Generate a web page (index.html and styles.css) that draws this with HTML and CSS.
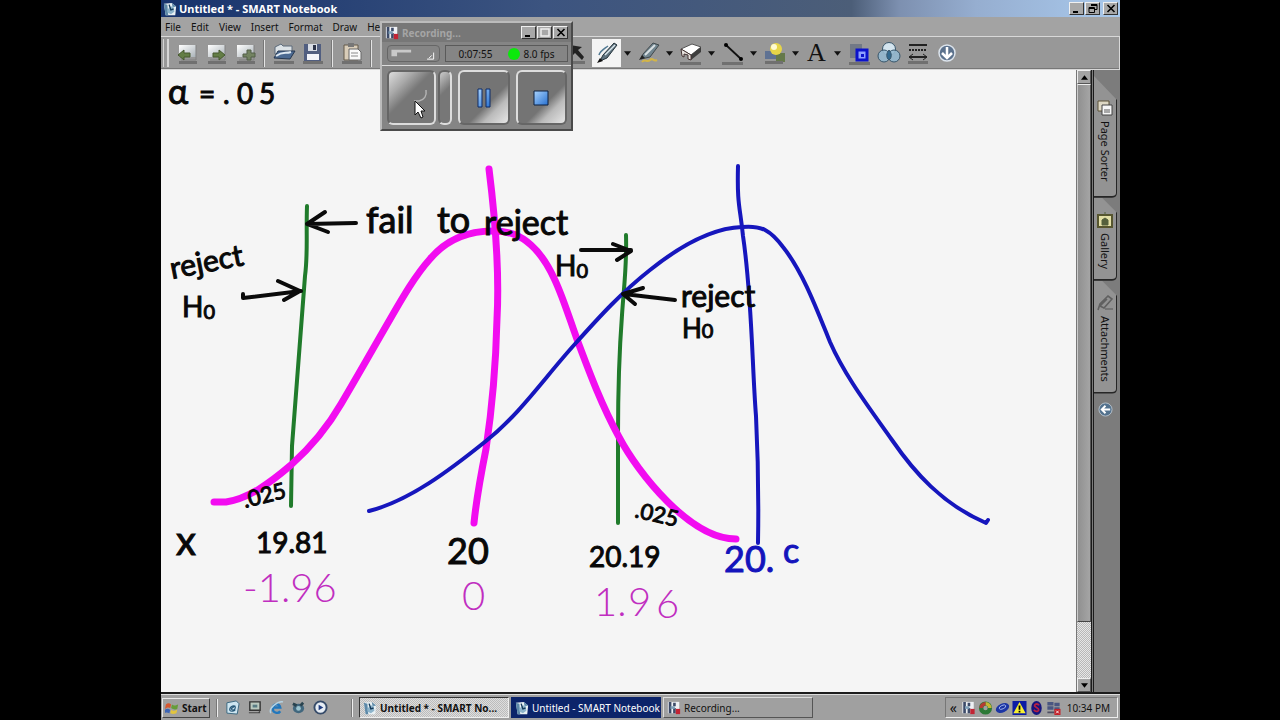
FILE: index.html
```html
<!DOCTYPE html>
<html lang="en">
<head>
<meta charset="utf-8">
<title>Untitled * - SMART Notebook</title>
<link rel="stylesheet" href="styles.css">
</head>
<body>
<svg class="defs" aria-hidden="true">
  <defs>
    <linearGradient id="metal" x1="0" y1="0" x2="1" y2="1"><stop offset="0" stop-color="#fff"/><stop offset="1" stop-color="#a9b2b8"/></linearGradient>
    <linearGradient id="blueFill" x1="0" y1="0" x2="1" y2="1"><stop offset="0" stop-color="#a9d4ff"/><stop offset="1" stop-color="#2870cf"/></linearGradient>
    <symbol id="i-app" viewBox="0 0 16 16"><path d="M1 2l9-1 5 4-1 10H3z" fill="#e9f1f4"/><path d="M1 2l4 1 1 12H3zM10 1l5 4-4 1z" fill="#5d89a8"/><path d="M5 9c2-3 5-5 7-4l1 6-4 3-4-2z" fill="#8db4cb"/><path d="M7 3l2 6 3-1" stroke="#163c5c" stroke-width="1.6" fill="none"/></symbol>
    <symbol id="i-rec" viewBox="0 0 16 16"><path d="M1 1h13v13H1z" fill="#eef0f4"/><path d="M2 1h3v13H2zM7 2h3v4H7zM7 8h3v6H7z" fill="#3c4a68"/><path d="M4 6h5v3H4z" fill="#7fa0b8"/><path d="M10 9h5v6h-5z" fill="#c22434"/></symbol>
    <symbol id="i-page" viewBox="0 0 24 24"><path d="M4 4h17v12H4z" fill="url(#metal)"/><path d="M4 20h18v3H4z" fill="#707070"/><path d="M21 4v15H6" stroke="#808080" fill="none"/></symbol>
    <symbol id="i-caret" viewBox="0 0 8 5"><path d="M0 0h8L4 5z" fill="#111"/></symbol>
  </defs>
</svg>

<div class="desktop">
  <header class="titlebar">
    <svg class="icon16"><use href="#i-app"/></svg>
    <h1 class="titlebar-text">Untitled * - SMART Notebook</h1>
    <div class="window-controls">
      <button class="ctl" aria-label="Minimize"><svg viewBox="0 0 10 9"><path d="M1 7h5v2H1z"/></svg></button>
      <button class="ctl" aria-label="Restore"><svg viewBox="0 0 10 9"><path d="M3 .5h6v5H7M3 1.5h6M1 3.5h5.500v5H1zM1 4.500h5" fill="none" stroke="#000"/></svg></button>
      <button class="ctl ctl-close" aria-label="Close"><svg viewBox="0 0 10 9"><path d="M1.500 1l7 7M8.500 1l-7 7" stroke="#000" stroke-width="1.600"/></svg></button>
    </div>
  </header>

  <nav class="menubar">
    <button>File</button><button>Edit</button><button>View</button><button>Insert</button><button>Format</button><button>Draw</button><button>Help</button>
  </nav>

  <div class="toolbar">
    <span class="grip"></span>
    <button class="tool" aria-label="Previous page"><svg viewBox="0 0 24 24"><use href="#i-page"/><path d="M3 14l6-5v3h6v4H9v3z" fill="#637d45" stroke="#46592f"/></svg></button>
    <button class="tool" aria-label="Next page"><svg viewBox="0 0 24 24"><use href="#i-page"/><path d="M21 14l-6-5v3H9v4h6v3z" fill="#637d45" stroke="#46592f"/></svg></button>
    <button class="tool" aria-label="Add page"><svg viewBox="0 0 24 24"><use href="#i-page"/><path d="M14 9h4v3h4v4h-4v3h-4v-3h-4v-3h4z" fill="#738361" stroke="#535f48"/></svg></button>
    <span class="sep"></span>
    <button class="tool" aria-label="Open"><svg viewBox="0 0 24 24"><path d="M3 6l6-3 2 2h9v8H3z" fill="#dce2e6" stroke="#5c6b7b"/><path d="M2 17l4-7h17l-5 8z" fill="#4b6991" stroke="#26374f"/><path d="M4 15c7-5 9-2 15-4" stroke="#dfe9f2" stroke-width="2" fill="none"/><path d="M2 20h20v3H2z" fill="#707070"/></svg></button>
    <button class="tool" aria-label="Save"><svg viewBox="0 0 24 24"><path d="M3 3h17v17H3z" fill="#515e80"/><path d="M7 3h9v7H7z" fill="#d8dce4"/><path d="M12 4h3v5h-3z" fill="#2c3348"/><path d="M6 13h12v6H6z" fill="#f3f4fa"/><path d="M2 20h20v3H2z" fill="#707070"/></svg></button>
    <span class="sep"></span>
    <button class="tool" aria-label="Paste"><svg viewBox="0 0 24 24"><path d="M4 4h14v15H4z" fill="#d9cdb9" stroke="#655b4a"/><path d="M8 2h6v4H8z" fill="#777"/><path d="M9 8h9l3 3v8H9z" fill="#fafafa" stroke="#666"/><path d="M11 12h7M11 15h7" stroke="#8a8a8a"/><path d="M2 20h20v3H2z" fill="#707070"/></svg></button>
    <span class="sep"></span>
    <span class="tool-run">
      <button class="tool" aria-label="Undo"><svg viewBox="0 0 24 24"><path d="M3 10l6-6v4c8 0 12 3 12 10-3-4-6-5-12-5v4z" fill="#6d84a8"/></svg></button>
      <button class="tool" aria-label="Redo"><svg viewBox="0 0 24 24"><path d="M21 10l-6-6v4C7 8 3 11 3 18c3-4 6-5 12-5v4z" fill="#6d84a8"/></svg></button>
    </span>
    <button class="tool" aria-label="Select"><svg viewBox="0 0 24 24"><path d="M4 4l12 2-4 3 6 7-2 3-7-7-3 3z" fill="#222"/><path d="M2 20h17v3H2z" fill="#707070"/></svg></button>
    <button class="tool active" aria-label="Pen"><svg viewBox="0 0 24 24"><path d="M5 20l3-6L19 2l3 2-10 13z" fill="#5f737f" stroke="#26343c"/><path d="M10 14L20 4" stroke="#dbe8ee" stroke-width="1.500"/><path d="M4 14c1-4 5-6 9-9" stroke="#517993" stroke-width="1.500" fill="none"/><path d="M2 22l3-5 3 3z" fill="#111"/></svg></button>
    <button class="drop" aria-label="Pen options"><svg><use href="#i-caret"/></svg></button>
    <button class="tool" aria-label="Highlighter"><svg viewBox="0 0 24 24"><path d="M4 18l2-5L16 2l6 2-9 12z" fill="#71858f" stroke="#40484c"/><path d="M8 14L18 4" stroke="#d9e0e2" stroke-width="2"/><path d="M2 19l3-5 3 3z" fill="#222"/><path d="M5 21c3-4 5 1 8-2s3 2 7 0" stroke="#d3b548" stroke-width="2" fill="none"/></svg></button>
    <button class="drop" aria-label="Highlighter options"><svg><use href="#i-caret"/></svg></button>
    <button class="tool" aria-label="Eraser"><svg viewBox="0 0 24 24"><path d="M2 8l11-5 9 3-10 8z" fill="#fff" stroke="#555"/><path d="M12 14l10-8v5L12 19z" fill="#3d3d3d"/><path d="M2 8l10 6v5l-3-1v-4l-4-1v3l-2-1z" fill="#e8e3df" stroke="#433"/><path d="M1 21h21v3H1z" fill="#707070"/></svg></button>
    <button class="drop" aria-label="Eraser options"><svg><use href="#i-caret"/></svg></button>
    <button class="tool" aria-label="Line"><svg viewBox="0 0 24 24"><path d="M5 4l15 14" stroke="#111" stroke-width="1.800"/><circle cx="5" cy="4" r="2"/><circle cx="20" cy="18" r="2"/><path d="M1 21h21v3H1z" fill="#707070"/></svg></button>
    <button class="drop" aria-label="Line options"><svg><use href="#i-caret"/></svg></button>
    <button class="tool" aria-label="Shapes"><svg viewBox="0 0 24 24"><path d="M2 10h12v8H2z" fill="#5f7293"/><path d="M13 12h9v9h-9z" fill="#65794a"/><circle cx="13" cy="8" r="6" fill="#e6d548"/><circle cx="11" cy="6" r="3" fill="#fffbd0"/><path d="M2 20h18v3H2z" fill="#707070"/></svg></button>
    <button class="drop" aria-label="Shape options"><svg><use href="#i-caret"/></svg></button>
    <button class="tool tool-letter" aria-label="Text">A</button>
    <button class="drop" aria-label="Text options"><svg><use href="#i-caret"/></svg></button>
    <button class="tool gap-left" aria-label="Properties"><svg viewBox="0 0 24 24"><path d="M2 3h12v14H2z" fill="#727986"/><path d="M9 9h10v10H9z" fill="#8da0ff" stroke="#0b12cc" stroke-width="3"/><path d="M13 13h3v3h-3z" fill="#0b12cc"/><path d="M1 21h21v3H1z" fill="#707070"/></svg></button>
    <button class="tool" aria-label="Transparency"><svg viewBox="0 0 24 24" stroke="#38566b"><circle cx="12" cy="8" r="6.500" fill="#d4e5ef"/><circle cx="7" cy="15" r="6" fill="#94b8cf" fill-opacity=".9"/><circle cx="17" cy="15" r="6" fill="#94b8cf" fill-opacity=".9"/><path d="M12 9c3 3 3 8 0 10-3-2-3-7 0-10z" fill="#31698f"/></svg></button>
    <button class="tool" aria-label="Line style"><svg viewBox="0 0 24 24"><path d="M3 4h18M3 16h18" stroke="#222" stroke-width="1.800"/><path d="M3 9h18" stroke="#222" stroke-width="2" stroke-dasharray="2 1"/><path d="M7 13l-4 3 4 3M17 13l4 3-4 3" fill="none" stroke="#222"/><path d="M2 20h20v3H2z" fill="#707070"/></svg></button>
    <button class="tool" aria-label="More tools"><svg viewBox="0 0 24 24"><circle cx="12" cy="12" r="8" fill="#5c728d" stroke="#dce4ec" stroke-width="1.500"/><path d="M12 6v10M7 12l5 5 5-5" stroke="#fff" stroke-width="2.500" fill="none"/></svg></button>
  </div>

  <main class="workspace">
    <svg class="page" viewBox="161 70 915 622" preserveAspectRatio="xMinYMin meet" role="img" aria-label="Two sampling distributions with rejection regions">
      <g class="ink green">
        <path d="M307 206c-1 30 1 48-2 70-5 60-9 118-13 170l-1 60"/>
        <path d="M626 235c1 30-2 50-4 80-3 40-4 90-4 120v88"/>
      </g>
      <g class="ink magenta">
        <path d="M214 502h12C248 499 270 483 291 465C311 447 326 430 341 404C357 377 370 354 385 328C399 304 413 278 430 259C446 240 468 231 493 231C509 231 520 235 531 245C555 266 566 310 578 342C590 374 602 406 619 437C638 473 690 539 736 539"/>
        <path d="M489 169c5 40 11 95 8 150-1 40-5 90-11 130-6 30-10 54-12 74"/>
      </g>
      <g class="ink blue">
        <path d="M369 511C409 501 450 470 486 441C520 414 545 377 575 344C600 316 622 292 650 270C680 246 712 228 742 227C762 225 771 231 783 247C803 272 817 310 830 342C845 376 868 406 892 440C914 472 942 504 986 523l2-3"/>
        <path d="M738 166c-1 40 2 40 5 70 9 60 9 130 13 180 2 40 3 70 2 127"/>
      </g>
      <g class="ink black">
        <path d="M356 223l-49 1M325 212l-18 12 21 8"/>
        <path d="M243 294v4l58-7M278 281l22 10-16 9"/>
        <path d="M581 250h50M613 244l18 7-14 9"/>
        <path d="M675 300l-51-6M643 288l-20 6 12 10"/>
      </g>
      <g class="note">
        <text class="size-34" x="168" y="104">α</text>
        <text class="size-28" x="199" y="104">=</text>
        <text class="size-28" x="223" y="104">.</text>
        <text class="size-28" x="237" y="104">0</text>
        <text class="size-28" x="259" y="104">5</text>
        <text class="size-36" x="366" y="233">fail</text>
        <text class="size-36" x="437" y="233">to</text>
        <text class="size-34" x="484" y="235">reject</text>
        <text class="size-30" transform="translate(172 279) rotate(-11)">reject</text>
        <text class="size-28" x="182" y="317">H<tspan class="sub" dy="2">0</tspan></text>
        <text class="size-28" x="555" y="276">H<tspan class="sub" dy="2">0</tspan></text>
        <text class="size-30" x="681" y="307">reject</text>
        <text class="size-26" x="682" y="338">H<tspan class="sub">0</tspan></text>
        <text class="size-22" transform="translate(245 508) rotate(-14)">.025</text>
        <text class="size-22" transform="translate(634 517) rotate(13)">.025</text>
        <text class="size-40" x="176" y="555">x</text>
        <text class="size-28" x="256" y="553">19.81</text>
        <text class="size-36" x="447" y="564">20</text>
        <text class="size-28" x="589" y="567">20.19</text>
      </g>
      <g class="note note-blue">
        <text class="size-36" x="724" y="572">20.</text>
        <text class="size-34" x="783" y="563">c</text>
      </g>
      <g class="note note-thin">
        <text class="size-40" x="243" y="602">-1.96</text>
        <text class="size-40" x="462" y="610">0</text>
        <text class="size-40" x="594" y="616">1.</text>
        <text class="size-40" x="628" y="616">9</text>
        <text class="size-40" x="656" y="618">6</text>
      </g>
    </svg>

    <div class="scrollbar">
      <button class="scroll-btn" aria-label="Scroll up"><svg viewBox="0 0 8 5"><path d="M0 5h8L4 0z"/></svg></button>
      <div class="scroll-thumb"></div>
      <div class="scroll-track"></div>
      <button class="scroll-btn" aria-label="Scroll down"><svg viewBox="0 0 8 5"><path d="M0 0h8L4 5z"/></svg></button>
    </div>

    <aside class="side">
      <button class="tab tab-first"><svg viewBox="0 0 16 16"><path d="M1 1h11v10H1z" fill="#ded8c4" stroke="#5c5238"/><path d="M5 5h10v10H5z" fill="#f7f7f7" stroke="#444"/><path d="M7 9h6v4H7z" fill="#a8a8a8"/></svg><span>Page Sorter</span></button>
      <button class="tab tab-second"><svg viewBox="0 0 16 16"><path d="M1 3h14v12H1z" fill="#e3dfa6" stroke="#57562f" stroke-width="2"/><path d="M8 0v3M5 13V8l3-2 3 2v5z" fill="#55603c" stroke="#55603c"/></svg><span>Gallery</span></button>
      <button class="tab tab-third"><svg viewBox="0 0 16 16"><path d="M1 15l2-6 8-8 4 3-8 9-4-2 7-7" fill="none" stroke="#606060" stroke-width="1.600"/><path d="M8 14h8" stroke="#747474" stroke-width="2"/></svg><span>Attachments</span></button>
      <button class="side-arrow" aria-label="Move side tabs"><svg viewBox="0 0 16 16"><circle cx="8" cy="8" r="7" fill="#53728e" stroke="#b5c0ca"/><path d="M13 8H4M8 4L4 8l4 4" stroke="#fff" stroke-width="2" fill="none"/></svg></button>
    </aside>
  </main>

  <footer class="taskbar">
    <button class="start"><svg viewBox="0 0 16 16"><path d="M1 4c2-2 4-2 6 0L6 8C4 7 3 7 0 9z" fill="#d6562f"/><path d="M8 4c3 2 4 1 7 0l-1 5c-3 1-4 1-7-1z" fill="#669c38"/><path d="M0 10c2-2 4-1 6 0l-1 4c-2-1-4-1-6 0z" fill="#3c64b4"/><path d="M7 10c3 2 4 1 7 0l-1 4c-3 1-4 1-7 0z" fill="#e2c53c"/></svg>Start</button>
    <span class="task-sep"></span>
    <div class="quick">
      <button aria-label="Outlook"><svg viewBox="0 0 16 16"><path d="M2 3l10-2 3 3-2 11-11-1z" fill="#cde5f0" stroke="#38657e"/><path d="M5 11c0-5 6-6 6-3s-4 4-4 1l4-3M5 11c2 2 4 1 6 0" fill="none" stroke="#275878" stroke-width="1.300"/></svg></button>
      <button aria-label="Show desktop"><svg viewBox="0 0 16 16"><path d="M3 2h11v9H3z" fill="#bac9bf" stroke="#333" stroke-width="1.500"/><path d="M6 5h5v3H6z" fill="#597c83"/><path d="M2 13h10l2-2v3H2z" fill="#454545"/></svg></button>
      <button aria-label="Internet Explorer"><svg viewBox="0 0 16 16"><path d="M12 12c-2 3-8 2-8-3s7-6 8-1H5" fill="none" stroke="#2177bd" stroke-width="2.500"/><path d="M2 14C-1 9 9 1 15 2" fill="none" stroke="#b6d3e3" stroke-width="1.500"/></svg></button>
      <button aria-label="Messenger"><svg viewBox="0 0 16 16"><ellipse cx="8" cy="9" rx="6" ry="5" fill="#41677e"/><path d="M2 4l4 2M13 3l-3 3" stroke="#29434f" stroke-width="3"/><circle cx="8" cy="9" r="2.500" fill="#9bc4cf"/></svg></button>
      <button aria-label="Media Player"><svg viewBox="0 0 16 16"><circle cx="8" cy="8" r="6.500" fill="#e7edf4" stroke="#364b69" stroke-width="2"/><path d="M6 5l5 3-5 3z" fill="#1e3c80"/></svg></button>
    </div>
    <span class="task-sep"></span>
    <div class="tasks">
      <button class="task task-pressed"><svg class="icon16"><use href="#i-app"/></svg><span>Untitled * - SMART No...</span></button>
      <button class="task task-flash"><svg class="icon16"><use href="#i-app"/></svg><span>Untitled - SMART Notebook</span></button>
      <button class="task"><svg class="icon16"><use href="#i-rec"/></svg><span>Recording...</span></button>
    </div>
    <div class="tray">
      <span class="chevrons">«</span>
      <svg><use href="#i-rec"/></svg>
      <svg viewBox="0 0 16 16"><circle cx="8" cy="8" r="5" fill="none" stroke="#2d7937" stroke-width="5"/><path d="M8 3a5 5 0 0 1 5 5" fill="none" stroke="#c5b535" stroke-width="4"/><path d="M3 8a5 5 0 0 1 5-5" fill="none" stroke="#b63a34" stroke-width="4"/></svg>
      <svg viewBox="0 0 16 16"><ellipse cx="8" cy="8" rx="8" ry="5" transform="rotate(-25 8 8)" fill="#1c35a4"/><ellipse cx="8" cy="7" rx="4" ry="2" transform="rotate(-25 8 7)" fill="none" stroke="#a3b7ef"/></svg>
      <svg viewBox="0 0 16 16"><path d="M0 0h16v16H0z" fill="#0b1ba4"/><path d="M8 1l7 13H1z" fill="#f6ef33"/><path d="M7 5h2v5H7zM7 11h2v2H7z"/></svg>
      <svg viewBox="0 0 16 16"><ellipse cx="8" cy="8" rx="6" ry="8" fill="#15157e"/><path d="M11 5c-2-3-6-1-5 1l4 3c2 3-3 4-5 1" stroke="#b52143" stroke-width="2" fill="none"/></svg>
      <svg viewBox="0 0 16 16"><path d="M1 1h7v4H1zM1 6h7v4H1zM9 2h6v4H9zM9 7h6v4H9z" fill="#4a5681"/><path d="M1 12h8v2H1z" fill="#4f4f63"/><path d="M9 9h7v7H9z" fill="#c32129"/><path d="M11 11l3 3M14 11l-3 3" stroke="#fff"/></svg>
      <time>10:34 PM</time>
    </div>
  </footer>

  <section class="recorder" aria-label="Recording">
    <div class="rec-title">
      <svg class="icon16"><use href="#i-rec"/></svg>
      <h2>Recording...</h2>
      <div class="window-controls">
        <button class="ctl" aria-label="Minimize recorder"><svg viewBox="0 0 10 9"><path d="M1 7h5v2H1z"/></svg></button>
        <button class="ctl" aria-label="Maximize recorder" disabled><svg viewBox="0 0 10 9"><path d="M1 1h8v7H1z" fill="none" stroke="#eee" stroke-width="1.500"/></svg></button>
        <button class="ctl" aria-label="Close recorder"><svg viewBox="0 0 10 9"><path d="M1.500 1l7 7M8.500 1l-7 7" stroke="#000" stroke-width="1.600"/></svg></button>
      </div>
    </div>
    <div class="rec-status">
      <button class="rec-mini" aria-label="Menu"><svg viewBox="0 0 52 16"><path d="M3 11V4h21v3H9v4z" fill="#c9c9c9"/><path d="M43 13l3-3M48 7v7h-7" stroke="#fff" fill="none"/></svg></button>
      <div class="rec-info"><span>0:07:55</span><span class="led"></span><span>8.0 fps</span></div>
    </div>
    <div class="rec-buttons">
      <button class="rec-key key-record" aria-label="Record"><svg viewBox="0 0 20 20"><path d="M18 2c1 6-2 10-7 11H6" fill="none" stroke="#b5b5b5" stroke-width="1.500"/></svg></button>
      <button class="rec-key key-narrow" aria-label="Options"></button>
      <button class="rec-key key-lit" aria-label="Pause"><svg viewBox="0 0 20 20"><path d="M4 1h4v18H4zM12 1h4v18h-4z" fill="url(#blueFill)" stroke="#0c2b66"/></svg></button>
      <button class="rec-key key-lit" aria-label="Stop"><svg viewBox="0 0 20 20"><path d="M3 3h14v14H3z" fill="url(#blueFill)" stroke="#0c2040"/></svg></button>
    </div>
    <svg class="pointer" viewBox="0 0 12 19"><path d="M1 1v14l3-3 3 6 2-1-2-6h4z" fill="#fff" stroke="#111"/></svg>
  </section>
</div>
</body>
</html>
```

FILE: styles.css
```css
* { box-sizing: border-box; }

body {
  margin: 0;
  background: #000;
  font-family: "Noto Sans", "Open Sans", sans-serif;
  font-size: 10px;
  line-height: 14px;
  color: #111;
}

button {
  margin: 0;
  padding: 0;
  border: 0;
  background: none;
  font: inherit;
  color: inherit;
}

svg { display: block; flex: none; }
.defs { position: absolute; width: 0; height: 0; }
.icon16 { width: 14px; height: 14px; }

.desktop {
  position: relative;
  display: flex;
  flex-direction: column;
  width: 75vw;
  height: 100vh;
  margin: 0 auto;
  background: #9d9d9d;
  border-left: 1px solid #000;
}

/* Title bar */
.titlebar {
  display: flex;
  align-items: center;
  flex: none;
  height: 17px;
  padding: 0 2px;
  gap: 2px;
  background: linear-gradient(90deg, #17336c, #3c5480 40%, #4c5e78 72%, #7d90b0 77%, #96aed0 85%, #a9c9ec);
}
.titlebar-text {
  flex: 1;
  margin: 0;
  color: #fff;
  font-size: 11px;
  font-weight: 700;
}
.window-controls { display: flex; gap: 1px; }
.ctl {
  display: flex;
  align-items: center;
  justify-content: center;
  width: 15px;
  height: 13px;
  background: #a8a8a8;
  border: 1px solid;
  border-color: #f0f0f0 #333 #333 #f0f0f0;
}
.ctl svg { width: 10px; height: 9px; }
.ctl-close { margin-left: 2px; }

/* Menus and tools */
.menubar {
  display: flex;
  flex: none;
  align-items: center;
  gap: 10px;
  height: 19px;
  padding: 0 4px;
  background: #a3a3a3;
}
.toolbar {
  display: flex;
  flex: none;
  align-items: center;
  height: 34px;
  padding-left: 2px;
  background: #989898;
  border: 1px solid #d8d8d8;
  border-width: 1px 1px 1px 0;
  box-shadow: inset 0 -1px #777;
}
.grip {
  width: 6px;
  height: 28px;
  margin-right: 3px;
  border: 1px solid #d4d4d4;
  border-width: 0 2px 0 1px;
}
.tool {
  display: flex;
  flex: none;
  align-items: center;
  justify-content: center;
  width: 29px;
  height: 28px;
}
.tool svg { width: 24px; height: 24px; }
.tool.active { background: #f4f4f4; }
.tool-letter {
  font-family: "Liberation Serif", serif;
  font-size: 26px;
  line-height: 26px;
}
.gap-left { margin-left: 1px; }
.tool-run { display: flex; flex: none; width: 187px; }
.sep {
  flex: none;
  width: 2px;
  height: 27px;
  margin: 0 4px;
  border-left: 1px solid #777;
  border-right: 1px solid #e4e4e4;
}
.drop {
  display: flex;
  flex: none;
  justify-content: center;
  width: 13px;
}
.drop svg { width: 7px; height: 5px; }

/* Work area */
.workspace {
  display: flex;
  flex: 1;
  min-height: 0;
  border-bottom: 2px solid #1c1c1c;
}
.page { flex: 1; min-width: 0; height: 100%; background: #f5f5f5; }
.ink { fill: none; stroke-linecap: round; stroke-linejoin: round; }
.green { stroke: #207b2b; stroke-width: 4; }
.magenta { stroke: #f20cf0; stroke-width: 7; }
.blue { stroke: #1616bd; stroke-width: 4; }
.black { stroke: #0b0b0b; stroke-width: 4; }
.note { font-family: Lato, sans-serif; fill: #080808; stroke: #080808; stroke-width: 1; }
.note-blue { fill: #1414bc; stroke: #1414bc; }
.note-thin { font-weight: 300; fill: #c02ec0; stroke: none; }
.size-22 { font-size: 22px; }
.size-26 { font-size: 26px; }
.size-28 { font-size: 28px; }
.size-30 { font-size: 30px; }
.size-34 { font-size: 34px; }
.size-36 { font-size: 36px; }
.size-40 { font-size: 40px; }
.sub { font-size: 20px; }

.scrollbar {
  display: flex;
  flex: none;
  flex-direction: column;
  width: 15px;
  border-left: 1px solid #777;
}
.scroll-btn {
  display: flex;
  flex: none;
  align-items: center;
  justify-content: center;
  height: 14px;
  background: #a4a4a4;
  border: 1px solid;
  border-color: #eee #555 #555 #eee;
}
.scroll-btn svg { width: 7px; height: 5px; }
.scroll-thumb {
  flex: 537;
  background: linear-gradient(90deg, #909090, #a5a5a5);
  border: 1px solid;
  border-color: #eee #555 #444 #ccc;
}
.scroll-track {
  flex: 56;
  background: repeating-conic-gradient(#e6e6e6 0 25%, #b8b8b8 0 50%) 0 0 / 2px 2px;
}

.side {
  display: flex;
  flex: none;
  flex-direction: column;
  width: 29px;
  padding: 6px 4px 0 0;
  background: #7c7c7c;
  border-left: 3px double #1b1b1b;
}
.tab {
  display: flex;
  align-items: center;
  gap: 5px;
  writing-mode: vertical-rl;
  width: 23px;
  padding-top: 24px;
  padding-bottom: 14px;
  background: #939393;
  border: 1px solid #262626;
  border-width: 0 1px 2px 0;
  border-radius: 0 0 5px 0;
  font-size: 11px;
  clip-path: polygon(0 0, 100% 24px, 100% 100%, 0 100%);
}
.tab svg { width: 16px; height: 16px; }
.tab-second, .tab-third { padding-top: 14px; padding-bottom: 10px; clip-path: polygon(0 0, 35% 0, 100% 15px, 100% 100%, 0 100%); }
.side-arrow { display: flex; justify-content: center; margin-top: 8px; }
.side-arrow svg { width: 15px; height: 15px; }

/* Taskbar */
.taskbar {
  display: flex;
  flex: none;
  align-items: center;
  height: 26px;
  padding: 2px 2px 2px 1px;
  background: #a0a0a0;
  border-top: 1px solid #ddd;
}
.start {
  display: flex;
  align-items: center;
  gap: 3px;
  width: 48px;
  height: 20px;
  padding-left: 2px;
  border: 1px solid;
  border-color: #e8e8e8 #444 #444 #e8e8e8;
  font-weight: 700;
}
.start svg { width: 14px; height: 14px; }
.task-sep {
  flex: none;
  width: 2px;
  height: 18px;
  margin: 0 6px;
  border-left: 1px solid #777;
  border-right: 1px solid #eee;
}
.quick { display: flex; flex: none; gap: 7px; width: 121px; padding-left: 1px; }
.quick svg { width: 15px; height: 15px; }
.tasks { display: flex; flex: 1; gap: 2px; min-width: 0; }
.task {
  display: flex;
  align-items: center;
  flex: 0 1 150px;
  gap: 3px;
  min-width: 0;
  height: 21px;
  padding: 0 3px;
  border: 1px solid;
  border-color: #ddd #555 #555 #ddd;
  white-space: nowrap;
}
.task-pressed {
  background: repeating-conic-gradient(#ddd 0 25%, #bcbcbc 0 50%) 0 0 / 2px 2px;
  border-color: #333 #eee #eee #333;
  font-weight: 700;
}
.task-flash { background: #0c246a; border-color: #0c246a; color: #fff; }
.tray {
  display: flex;
  flex: none;
  align-items: center;
  gap: 2px;
  height: 21px;
  padding: 0 7px 0 4px;
  border: 1px solid;
  border-color: #777 #eee #eee #777;
}
.tray svg { width: 15px; height: 14px; }
.tray time { margin-left: 4px; }
.chevrons { width: 9px; font-size: 14px; }

/* Floating recorder window */
.recorder {
  position: absolute;
  top: 21px;
  left: 219px;
  width: 193px;
  background: #858585;
  border: 2px solid;
  border-color: #bbb #4a4a4a #4a4a4a #bbb;
}
.rec-title {
  display: flex;
  align-items: center;
  gap: 3px;
  height: 19px;
  padding: 0 3px;
  background: #777;
}
.rec-title h2 {
  flex: 1;
  margin: 0;
  color: #a5a5a5;
  font-size: 10px;
  font-weight: 700;
}
.rec-status { display: flex; gap: 5px; padding: 3px 3px 3px 5px; border-bottom: 1px solid #ddd; }
.rec-mini {
  width: 53px;
  height: 17px;
  border: 1px solid #666;
  border-radius: 4px;
}
.rec-mini svg { width: 50px; height: 15px; }
.rec-info {
  display: flex;
  flex: 1;
  align-items: center;
  justify-content: center;
  height: 17px;
  border: 1px solid #5a5a5a;
}
.led {
  width: 12px;
  height: 12px;
  margin: 0 3px 0 16px;
  border-radius: 50%;
  background: #0ce80c;
}
.rec-buttons { display: flex; gap: 6px; padding: 4px 4px 4px 5px; }
.rec-key {
  display: flex;
  flex: 1;
  align-items: center;
  justify-content: center;
  height: 55px;
  background: #777;
  border: 2px solid;
  border-color: #ddd #666 #666 #ddd;
  border-radius: 6px;
}
.rec-key svg { width: 20px; height: 20px; }
.key-record {
  flex: none;
  width: 49px;
  justify-content: flex-end;
  padding-right: 6px;
  margin-right: -4px;
  background: linear-gradient(135deg, #ddd, #aaa 25%, #777 45%);
  border-color: #666 #ddd #ddd #666;
}
.key-narrow {
  flex: none;
  width: 14px;
  background: linear-gradient(135deg, #ccc, #777 40%);
  border-color: #666 #ddd #ddd #666;
}
.key-lit { background: linear-gradient(135deg, #747474 60%, #bbb 75%, #e6e6e6); }
.pointer { position: absolute; left: 32px; top: 77px; width: 12px; height: 19px; }
```
